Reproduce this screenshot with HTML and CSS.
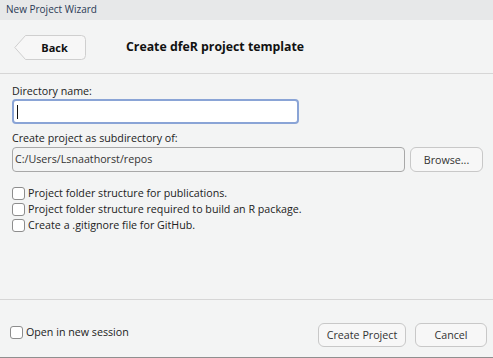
FILE: index.html
```html
<!DOCTYPE html>
<html lang="en">
<head>
  <meta charset="UTF-8">
  <title>New Project Wizard</title>
  <link rel="stylesheet" href="styles.css">
</head>
<body>
  <div class="window">
    <div class="titlebar">New Project Wizard</div>

    <div class="header">
      <button class="back">
        <svg class="back-shape" width="72" height="25" viewBox="0 0 72 25">
          <path d="M11.5 0.5 H67.5 Q71.5 0.5 71.5 4.5 V20.5 Q71.5 24.5 67.5 24.5 H11.5 L0.8 12.5 Z" fill="#f7f7f7" stroke="#cfcfcf"/>
        </svg>
        <span>Back</span>
      </button>
      <h1>Create dfeR project template</h1>
    </div>

    <div class="form">
      <label class="field-label">Directory name:</label>
      <div class="name-input"><span class="caret"></span></div>

      <label class="field-label second">Create project as subdirectory of:</label>
      <div class="path-row">
        <div class="path-input">C:/Users/Lsnaathorst/repos</div>
        <button class="btn browse">Browse...</button>
      </div>

      <div class="options">
        <label class="check"><input type="checkbox"> Project folder structure for publications.</label>
        <label class="check"><input type="checkbox"> Project folder structure required to build an R package.</label>
        <label class="check"><input type="checkbox"> Create a .gitignore file for GitHub.</label>
      </div>
    </div>

    <div class="footer">
      <label class="check session"><input type="checkbox"> Open in new session</label>
      <div class="actions">
        <button class="btn">Create Project</button>
        <button class="btn cancel">Cancel</button>
      </div>
    </div>
  </div>
</body>
</html>
```

FILE: styles.css
```css
body {
  margin: 0;
  font-family: "Open Sans", "Noto Sans", sans-serif;
  font-size: 10.7px;
  color: #222;
  background: #f3f4f4;
}
.window {
  width: 493px;
  height: 358px;
  display: flex;
  flex-direction: column;
  background: #f3f4f4;
  border-bottom: 1px solid #8f8f8f;
  box-sizing: border-box;
}
.titlebar {
  height: 20px;
  line-height: 19px;
  padding-left: 6px;
  background: #e7e8e9;
  color: #2b3a55;
  font-size: 10px;
  box-sizing: border-box;
}
.header {
  height: 54px;
  display: flex;
  align-items: center;
  padding-left: 14px;
  border-bottom: 1px solid #d6d6d6;
  box-sizing: border-box;
}
.back {
  position: relative;
  width: 72px;
  height: 25px;
  padding: 0 0 0 9px;
  margin-top: 1px;
  border: none;
  background: none;
  font-family: inherit;
  font-size: 11px;
  font-weight: bold;
  color: #111;
}
.back-shape {
  position: absolute;
  left: 0;
  top: 0;
}
.back span {
  position: relative;
}
h1 {
  margin: 0 0 0 40px;
  font-size: 12.3px;
  font-weight: bold;
  color: #111;
}
.form {
  flex: 1;
  padding: 10px 0 0 12px;
}
.field-label {
  display: block;
  line-height: 14px;
  color: #222;
}
.field-label.second {
  margin-top: 7px;
}
.name-input {
  width: 287px;
  height: 25px;
  margin-top: 1px;
  background: #fff;
  border: 2px solid #8aa4d6;
  border-radius: 4px;
  box-sizing: border-box;
  display: flex;
  align-items: center;
  padding-left: 3px;
}
.caret {
  width: 1px;
  height: 14px;
  background: #111;
}
.path-row {
  display: flex;
  align-items: center;
  margin-top: 2px;
}
.path-input {
  width: 393px;
  height: 25px;
  line-height: 23px;
  padding-left: 2px;
  border: 1px solid #a8a8a8;
  border-radius: 4px;
  box-sizing: border-box;
  color: #333;
}
.btn {
  height: 24px;
  border: 1px solid #c8c8c8;
  border-radius: 6px;
  background: #f7f7f7;
  font-family: inherit;
  font-size: 10.7px;
  color: #333;
  padding: 0;
}
.browse {
  width: 73px;
  margin-left: 5px;
  height: 25px;
}
.options {
  margin-top: 13px;
}
.check {
  display: flex;
  align-items: center;
  height: 16px;
  color: #222;
}
.check input {
  appearance: none;
  width: 13px;
  height: 13px;
  margin: 0 3px 0 0;
  background: #fff;
  border: 1px solid #8d8d8d;
  border-radius: 3px;
}
.footer {
  height: 58px;
  border-top: 1px solid #d6d6d6;
  display: flex;
  align-items: flex-start;
  justify-content: space-between;
  padding: 0 6px 0 10px;
  box-sizing: border-box;
}
.session {
  margin-top: 24px;
}
.actions {
  display: flex;
  gap: 9px;
  margin-top: 23px;
}
.actions .btn {
  width: 88px;
}
.actions .cancel {
  width: 72px;
}
```
